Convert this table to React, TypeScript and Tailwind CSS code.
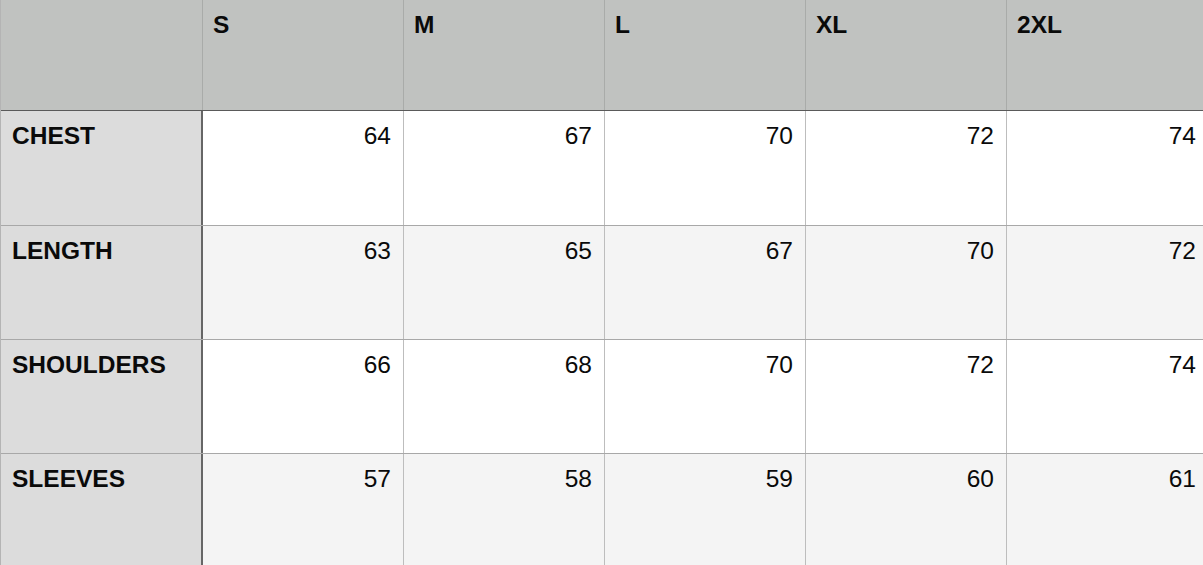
const sizes = ["S", "M", "L", "XL", "2XL"];

const rows = [
  { label: "CHEST", values: [64, 67, 70, 72, 74] },
  { label: "LENGTH", values: [63, 65, 67, 70, 72] },
  { label: "SHOULDERS", values: [66, 68, 70, 72, 74] },
  { label: "SLEEVES", values: [57, 58, 59, 60, 61] },
];

export default function App() {
  return (
    <main
      className="w-[1203px] h-[565px] overflow-hidden bg-white text-[#0a0a0a] text-[24.5px] leading-[1.15]"
      style={{ fontFamily: '"Liberation Sans", Arial, sans-serif' }}
    >
      <div className="w-[1208px] border-l border-[#b4b4b4]">
        {/* Header */}
        <div className="flex h-[111px] bg-[#c0c2c0] border-b border-[#5a5a5a]">
          <div className="w-[202px] shrink-0 border-r border-[#a9aba9]" />
          {sizes.map((size, i) => (
            <div
              key={size}
              className={
                i < sizes.length - 1
                  ? "w-[201px] shrink-0 border-r border-[#a9aba9] pl-[10px] pt-[11px] font-bold"
                  : "w-[201px] shrink-0 pl-[10px] pt-[11px] font-bold"
              }
            >
              {size}
            </div>
          ))}
        </div>

        {/* Body */}
        {rows.map((row, r) => (
          <div
            key={row.label}
            className={
              r === 0
                ? "flex h-[115px] bg-white border-b border-[#a8a8a8]"
                : r % 2 === 0
                  ? "flex h-[114px] bg-white border-b border-[#a8a8a8]"
                  : "flex h-[114px] bg-[#f4f4f4] border-b border-[#a8a8a8]"
            }
          >
            <div className="w-[202px] shrink-0 bg-[#dcdcdc] border-r-2 border-[#666] pl-[11px] pt-[11px] font-bold">
              {row.label}
            </div>
            {row.values.map((v, i) => (
              <div
                key={i}
                className={
                  i < row.values.length - 1
                    ? "w-[201px] shrink-0 border-r border-[#bdbdbd] pr-[12px] pt-[11px] text-right"
                    : "w-[201px] shrink-0 pr-[12px] pt-[11px] text-right"
                }
              >
                {v}
              </div>
            ))}
          </div>
        ))}
      </div>
    </main>
  );
}
